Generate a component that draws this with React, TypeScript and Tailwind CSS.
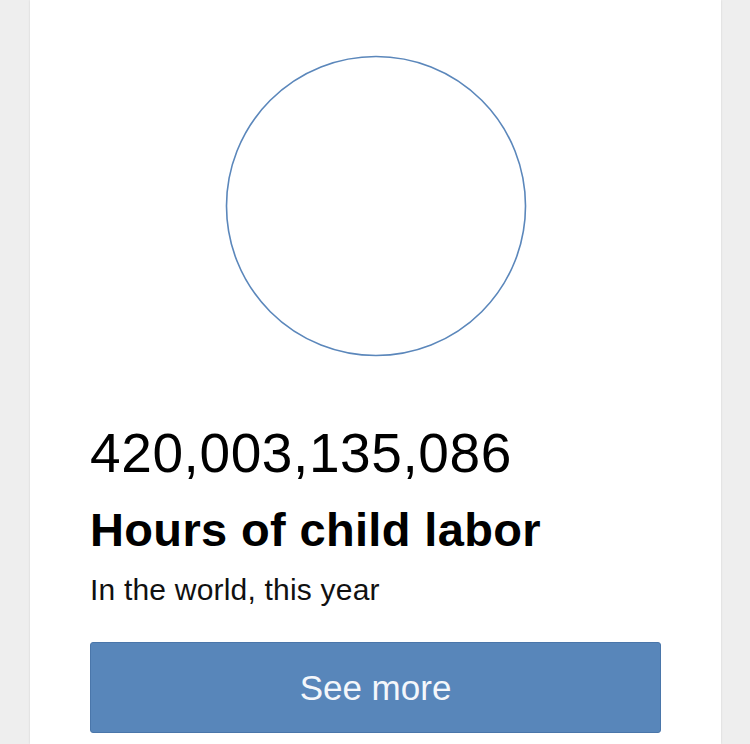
import React from 'react';

const App: React.FC = () => {
  return (
    <div className="h-[744px] w-[750px] overflow-hidden bg-[#eeeeee]" style={{ fontFamily: '"Liberation Sans", Arial, sans-serif' }}>
      <div className="ml-[30px] h-full w-[691px] bg-white shadow-[0_0_2px_rgba(0,0,0,0.12)]">
        {/* Counter card */}
        <div className="flex flex-col px-[60px] pt-[55px]">
          <div className="flex justify-center">
            <svg width="302" height="302" viewBox="0 0 302 302">
              <circle cx="151" cy="151" r="149.5" fill="none" stroke="#5b87bb" strokeWidth="1.6" />
            </svg>
          </div>

          <div className="mt-[69px] text-[55px] leading-none tracking-[0.6px] text-black">420,003,135,086</div>
          <h2 className="mt-[25px] text-[47px] font-bold leading-none tracking-[0.35px] text-black">Hours of child labor</h2>
          <p className="mt-[22px] text-[30px] leading-none tracking-[0.2px] text-[#111111]">In the world, this year</p>

          <button className="mt-[37px] flex h-[91px] w-full items-center justify-center rounded-[3px] border border-[#4a76aa] bg-[#5886ba] pt-[2px] text-[35px] text-[#f4f7fb]">
            See more
          </button>
        </div>
      </div>
    </div>
  );
};

export default App;
